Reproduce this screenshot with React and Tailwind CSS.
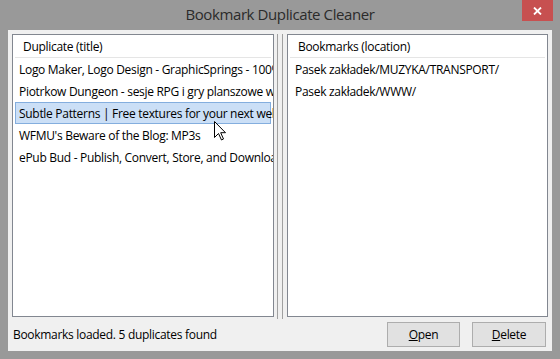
import React from 'react';

const titles = [
    'Logo Maker, Logo Design - GraphicSprings - 100% Free Logo Design',
    'Piotrkow Dungeon - sesje RPG i gry planszowe w Piotrkowie',
    'Subtle Patterns | Free textures for your next web project',
    "WFMU's Beware of the Blog: MP3s",
    'ePub Bud - Publish, Convert, Store, and Download eBooks',
];

const locations = ['Pasek zakładek/MUZYKA/TRANSPORT/', 'Pasek zakładek/WWW/'];

function ListBox({ header, items, selected, textPad, headerPad, width }) {
    return (
        <div className={`${width} h-[283px] border border-[#828790] bg-white overflow-hidden`}>
            {/* Header */}
            <div className="h-[23px] pt-[2px] flex items-center border-b border-[#e5e5e5] mx-[2px]">
                <span className={`${headerPad} whitespace-nowrap`}>{header}</span>
            </div>
            {items.map((item, i) => (
                <div
                    key={i}
                    className={`h-[22px] pt-[2px] flex items-center whitespace-nowrap mx-[2px] border ${
                        i === selected ? 'bg-[#cbdff6] border-[#84aede]' : 'border-transparent'
                    }`}
                >
                    <span className={textPad}>{item}</span>
                </div>
            ))}
        </div>
    );
}

export default function App() {
    return (
        <div className="w-[560px] h-[359px] bg-[#999999] flex flex-col text-[12px] tracking-[-0.3px] text-black font-['Segoe_UI','Open_Sans',sans-serif] relative">
            {/* Title bar */}
            <div className="h-[30px] relative flex items-center justify-center">
                <span className="text-[15px] tracking-[-0.4px] text-[#2b2b2b] mt-[-1px]">Bookmark Duplicate Cleaner</span>
                <div className="absolute top-0 right-[7px] w-[31px] h-[21px] bg-[#c75050] flex items-center justify-center">
                    <svg width="9" height="8" viewBox="0 0 9 8">
                        <path d="M1 0.5 L8 7.5 M8 0.5 L1 7.5" stroke="white" strokeWidth="1.8" />
                    </svg>
                </div>
            </div>

            {/* Client area */}
            <div className="mx-[8px] mb-[8px] flex-1 bg-[#f0f0f0] flex flex-col">
                <div className="flex items-start px-[4px] pt-[4px]">
                    <ListBox
                        header="Duplicate (title)"
                        items={titles}
                        selected={2}
                        width="w-[262px]"
                        headerPad="pl-[8px]"
                        textPad="pl-[3px]"
                    />
                    {/* Splitter */}
                    <div className="w-[13px] h-[285px] flex pl-[3px] gap-[4px]">
                        <div className="w-px h-full bg-[#a0a0a0]"></div>
                        <div className="w-px h-full bg-[#a0a0a0]"></div>
                    </div>
                    <ListBox
                        header="Bookmarks (location)"
                        items={locations}
                        selected={-1}
                        width="flex-1"
                        headerPad="pl-[8px]"
                        textPad="pl-[4px]"
                    />
                </div>

                {/* Bottom bar */}
                <div className="flex items-center mt-[3px] pl-[5px] pr-[6px]">
                    <span className="flex-1 whitespace-nowrap">Bookmarks loaded. 5 duplicates found</span>
                    <button className="w-[73px] h-[25px] bg-[#e1e1e1] border border-[#adadad] flex items-center justify-center">
                        <span><span className="underline">O</span>pen</span>
                    </button>
                    <button className="w-[74px] h-[25px] ml-[12px] bg-[#e1e1e1] border border-[#adadad] flex items-center justify-center">
                        <span><span className="underline">D</span>elete</span>
                    </button>
                </div>
            </div>

            {/* Mouse cursor */}
            <svg className="absolute left-[214px] top-[121px]" width="13" height="20" viewBox="0 0 13 20">
                <path
                    d="M0.5 0.5 L0.5 16.5 L4.5 12.5 L7.5 19 L9.5 18 L6.7 11.7 L11.5 11.7 Z"
                    fill="white"
                    stroke="black"
                    strokeWidth="1"
                    strokeLinejoin="miter"
                />
            </svg>
        </div>
    );
}
